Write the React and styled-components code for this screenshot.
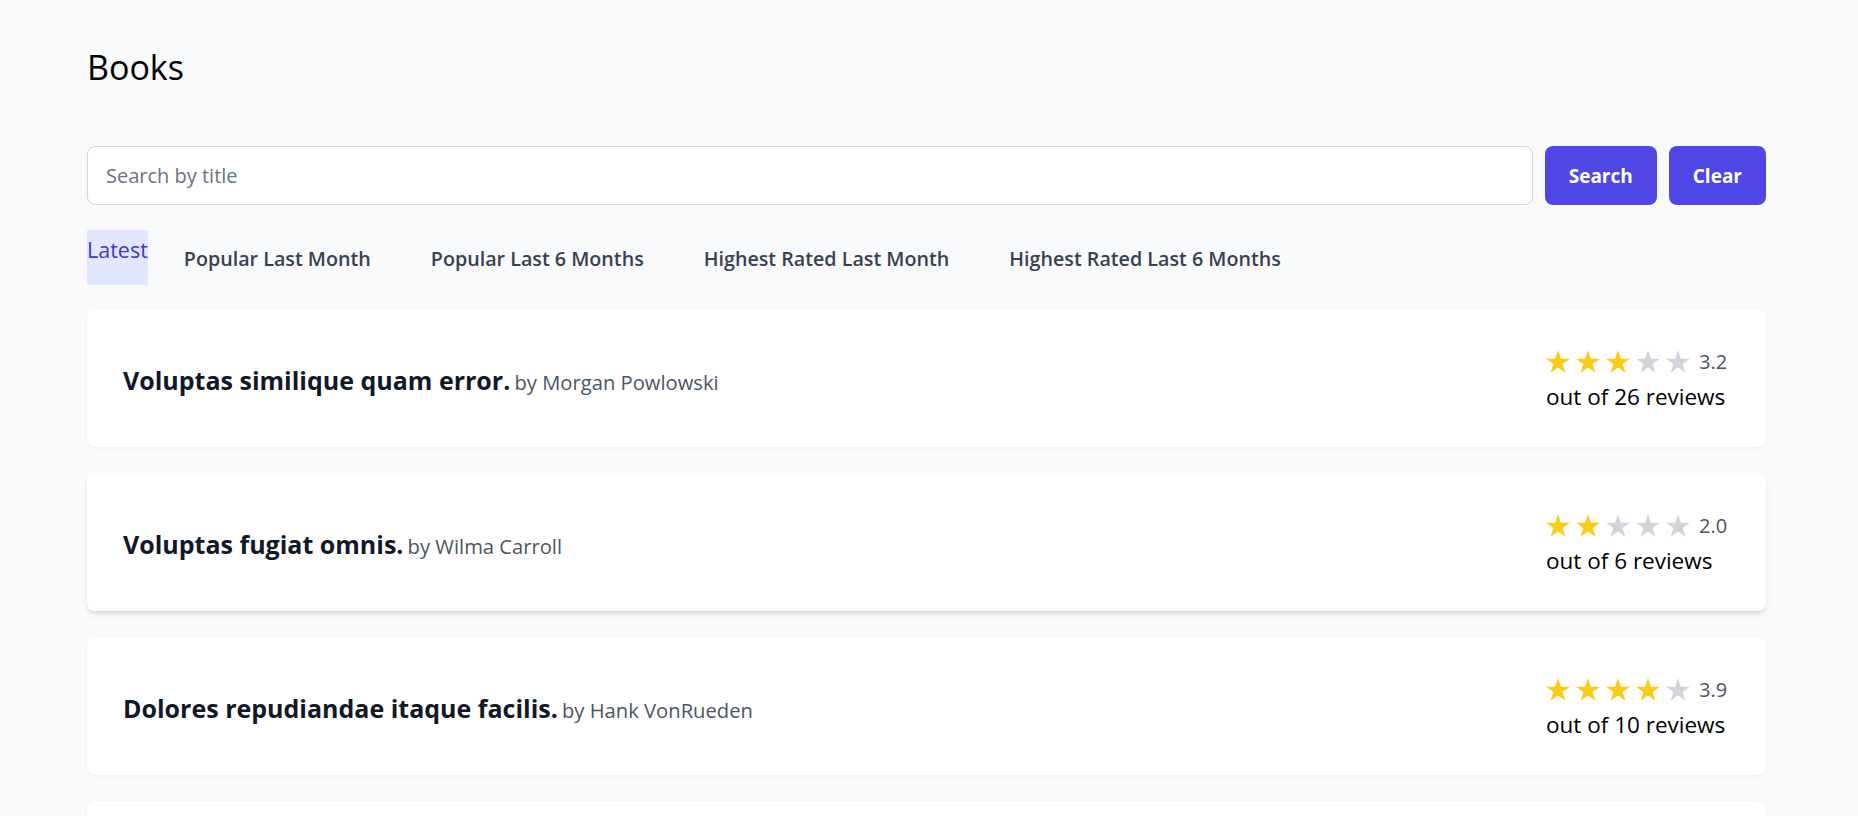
import { useState } from 'react';
import styled, { createGlobalStyle } from 'styled-components';

const GlobalStyle = createGlobalStyle`
  html, body {
    margin: 0;
    padding: 0;
    background: #f9fafb;
  }
  body {
    font-family: "Open Sans", "Noto Sans", "Liberation Sans", sans-serif;
    color: #000;
  }
  * { box-sizing: border-box; }
`

const books = [
  { title: 'Voluptas similique quam error.', author: 'Morgan Powlowski', rating: 3.2, reviews: 26 },
  { title: 'Voluptas fugiat omnis.', author: 'Wilma Carroll', rating: 2.0, reviews: 6 },
  { title: 'Dolores repudiandae itaque facilis.', author: 'Hank VonRueden', rating: 3.9, reviews: 10 },
  { title: 'Quia et voluptatem aut.', author: 'Elsa Kuhlman', rating: 3.5, reviews: 14 },
]

const tabs = [
  'Latest',
  'Popular Last Month',
  'Popular Last 6 Months',
  'Highest Rated Last Month',
  'Highest Rated Last 6 Months',
]

const Star = ({ filled }) => (
  <StarIcon viewBox="0 0 24 23" $filled={filled}>
    <polygon points="12,0 14.83,8.72 24,8.72 16.58,14.11 19.42,22.83 12,17.44 4.58,22.83 7.42,14.11 0,8.72 9.17,8.72" />
  </StarIcon>
)

const App = () => {
  const [active, setActive] = useState('Latest')
  const [query, setQuery] = useState('')

  return (
    <Page>
      <GlobalStyle />
      <Heading>Books</Heading>

      <SearchRow onSubmit={(e) => e.preventDefault()}>
        <SearchInput
          placeholder="Search by title"
          value={query}
          onChange={(e) => setQuery(e.target.value)}
        />
        <Button type="submit">Search</Button>
        <Button type="button" onClick={() => setQuery('')}>Clear</Button>
      </SearchRow>

      <Tabs>
        {tabs.map((t) => (
          <Tab key={t} $active={active === t} onClick={() => setActive(t)}>{t}</Tab>
        ))}
      </Tabs>

      <List>
        {books.map((b, i) => (
          <Card key={b.title} $raised={i === 1}>
            <TitleLine>
              <Title>{b.title}</Title> <Author>by {b.author}</Author>
            </TitleLine>
            <Rating>
              <Stars>
                {[1, 2, 3, 4, 5].map((n) => (
                  <Star key={n} filled={n <= Math.round(b.rating)} />
                ))}
                <Score>{b.rating.toFixed(1)}</Score>
              </Stars>
              <Reviews>out of {b.reviews} reviews</Reviews>
            </Rating>
          </Card>
        ))}
      </List>
    </Page>
  );
}

const Page = styled.main`
  padding: 43px 92px 0 87px;
`

const Heading = styled.h1`
  margin: 0 0 55px;
  font-size: 34px;
  line-height: 48px;
  font-weight: 400;
  color: #000;
`

const SearchRow = styled.form`
  display: flex;
  gap: 12px;
  height: 59px;
`

const SearchInput = styled.input`
  flex: 1;
  height: 100%;
  padding: 0 18px;
  border: 1px solid #d1d5db;
  border-radius: 8px;
  background: #fff;
  font-family: inherit;
  font-size: 20px;
  color: #111827;
  outline: none;

  &::placeholder {
    color: #6b7280;
  }
`

const Button = styled.button`
  height: 100%;
  padding: 0 24px;
  border: none;
  border-radius: 8px;
  background: #4f46e5;
  color: #fff;
  font-family: inherit;
  font-size: 19px;
  font-weight: 700;
  cursor: pointer;
`

const Tabs = styled.div`
  display: flex;
  gap: 12px;
  margin-top: 25px;
  height: 55px;
`

const Tab = styled.button`
  display: flex;
  align-items: ${({ $active }) => ($active ? 'flex-start' : 'center')};
  padding: ${({ $active }) => ($active ? '5px 0 0' : '3px 24px 0')};
  border: none;
  background: ${({ $active }) => ($active ? '#e0e7ff' : 'transparent')};
  color: ${({ $active }) => ($active ? '#4338ca' : '#374151')};
  font-family: inherit;
  font-size: ${({ $active }) => ($active ? '21.5px' : '19.7px')};
  font-weight: ${({ $active }) => ($active ? 400 : 600)};
  line-height: 30px;
  cursor: pointer;
  white-space: nowrap;
`

const List = styled.div`
  display: flex;
  flex-direction: column;
  gap: 26px;
  margin-top: 24px;
`

const Card = styled.div`
  display: flex;
  align-items: center;
  justify-content: space-between;
  height: 138px;
  padding: 0 38px 0 36px;
  background: #fff;
  border-radius: 8px;
  box-shadow: ${({ $raised }) =>
    $raised
      ? '0 4px 6px -1px rgba(0,0,0,0.1), 0 2px 4px -2px rgba(0,0,0,0.1)'
      : '0 1px 3px rgba(0,0,0,0.06)'};
`

const TitleLine = styled.div`
  padding-top: 4px;
`

const Title = styled.span`
  font-size: 25px;
  font-weight: 700;
  color: #111827;
`

const Author = styled.span`
  font-size: 20.2px;
  color: #4b5563;
`

const Rating = styled.div`
  width: 182px;
  padding-top: 4px;
`

const Stars = styled.div`
  display: flex;
  align-items: center;
  gap: 6px;
  height: 30px;
`

const StarIcon = styled.svg`
  width: 24px;
  height: 23px;
  fill: ${({ $filled }) => ($filled ? '#facc15' : '#d1d5db')};
`

const Score = styled.span`
  margin-left: 3px;
  font-size: 20px;
  color: #4b5563;
`

const Reviews = styled.div`
  margin-top: 4px;
  font-size: 22.5px;
  line-height: 34px;
  color: #000;
  white-space: nowrap;
`

export default App;
